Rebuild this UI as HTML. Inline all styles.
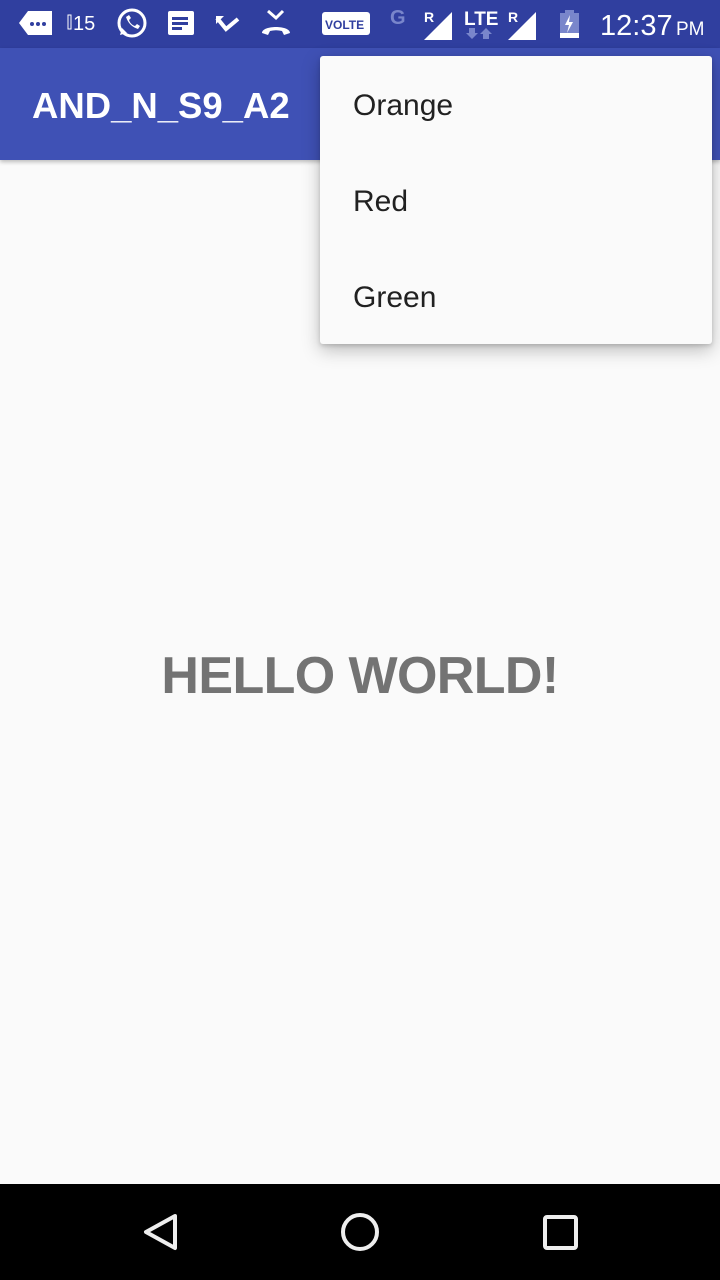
<!DOCTYPE html>
<html><head><meta charset="utf-8"><style>
*{margin:0;padding:0;box-sizing:border-box}
body{width:720px;height:1280px;background:#fafafa;position:relative;overflow:hidden;font-family:"Liberation Sans",sans-serif}
.sb{position:absolute;left:0;top:0;width:720px;height:48px;background:#303f9f;color:#fff}
.tb{position:absolute;left:0;top:48px;width:720px;height:112px;background:#3f51b5;box-shadow:0 2px 4px rgba(0,0,0,.25)}
.title{position:absolute;left:32px;top:86px;color:#fff;font-size:36.5px;font-weight:bold;line-height:40px}
.menu{position:absolute;left:320px;top:56px;width:392px;height:288px;background:#fafafa;border-radius:3px;box-shadow:0 6px 18px rgba(0,0,0,.25),0 2px 4px rgba(0,0,0,.15)}
.menu div{height:96px;line-height:100px;padding-left:33px;font-size:30px;color:#212121}
.hello{position:absolute;left:0;width:720px;top:646px;text-align:center;font-size:52px;font-weight:bold;color:#737373;line-height:60px;letter-spacing:-0.6px}
.nav{position:absolute;left:0;top:1184px;width:720px;height:96px;background:#000}
</style></head><body>
<div class="sb">
<svg width="720" height="48" style="position:absolute;left:0;top:0">
<path d="M28 11h24v24H28l-9-12z" fill="#fff"/><circle cx="32" cy="24" r="2" fill="#303f9f"/><circle cx="38" cy="24" r="2" fill="#303f9f"/><circle cx="44" cy="24" r="2" fill="#303f9f"/>
<text x="73" y="30" fill="#fff" font-size="20" font-family="Liberation Sans">15</text>
<rect x="68" y="15" width="3" height="14" fill="none" stroke="#fff" stroke-width="1"/>
<circle cx="132" cy="23" r="13" fill="none" stroke="#fff" stroke-width="3"/><path d="M120 35l2-7 5 5z" fill="#fff"/>
<path d="M126 17c2 6 6 10 12 12l2-3-3-2-2 2c-3-1-5-3-6-6l2-2-2-3z" fill="#fff"/>
<rect x="168" y="11" width="26" height="24" rx="2" fill="#fff"/><rect x="172" y="17" width="16" height="3" fill="#303f9f"/><rect x="172" y="22" width="16" height="3" fill="#303f9f"/><rect x="172" y="27" width="10" height="3" fill="#303f9f"/>
<path d="M217 18l9 11 12-10" fill="none" stroke="#fff" stroke-width="4"/><path d="M216 16h8l-8 8z" fill="#fff"/>
<path d="M268 11l8 7 7-7" fill="none" stroke="#fff" stroke-width="3"/><path d="M262 33c0-8 28-8 28 0l-6 2-2-4c-4-1-8-1-12 0l-2 4z" fill="#fff"/>
<rect x="322" y="12" width="48" height="23" rx="3" fill="#fff"/><text x="325" y="29" fill="#303f9f" font-size="12" font-weight="bold" font-family="Liberation Sans">VOLTE</text>
<text x="390" y="24" fill="#7986cb" font-size="20" font-weight="bold" font-family="Liberation Sans">G</text>
<text x="424" y="22" fill="#fff" font-size="14" font-weight="bold" font-family="Liberation Sans">R</text>
<path d="M424 40L452 12V40z" fill="#fff"/>
<text x="464" y="25" fill="#fff" font-size="19" font-weight="bold" font-family="Liberation Sans">LTE</text>
<path d="M469 28h6v5h3l-6 6-6-6h3z" fill="#7986cb"/><path d="M489 39h-6v-5h-3l6-6 6 6h-3z" fill="#7986cb"/>
<text x="508" y="22" fill="#fff" font-size="14" font-weight="bold" font-family="Liberation Sans">R</text>
<path d="M508 40L536 12V40z" fill="#fff"/>
<rect x="560" y="13" width="19" height="25" fill="#7986cb"/><rect x="565" y="10" width="9" height="3" fill="#7986cb"/><rect x="560" y="33" width="19" height="5" fill="#fff"/><path d="M570 15l-5 10h4l-2 8 6-11h-4z" fill="#fff"/>
<text x="600" y="35" fill="#fff" font-size="29" font-family="Liberation Sans">12:37</text>
<text x="676" y="35" fill="#fff" font-size="19" font-family="Liberation Sans">PM</text>
</svg>
</div>
<div class="tb"></div>
<div class="title">AND_N_S9_A2</div>
<div class="menu"><div>Orange</div><div>Red</div><div>Green</div></div>
<div class="hello">HELLO WORLD!</div>
<div class="nav">
<svg width="720" height="96" style="position:absolute;left:0;top:0">
<path d="M175 32L146 48l29 16z" fill="none" stroke="#eee" stroke-width="4" stroke-linejoin="round"/>
<circle cx="360" cy="48" r="17" fill="none" stroke="#eee" stroke-width="4"/>
<rect x="545" y="33" width="31" height="31" rx="2" fill="none" stroke="#eee" stroke-width="4"/>
</svg>
</div>
</body></html>
